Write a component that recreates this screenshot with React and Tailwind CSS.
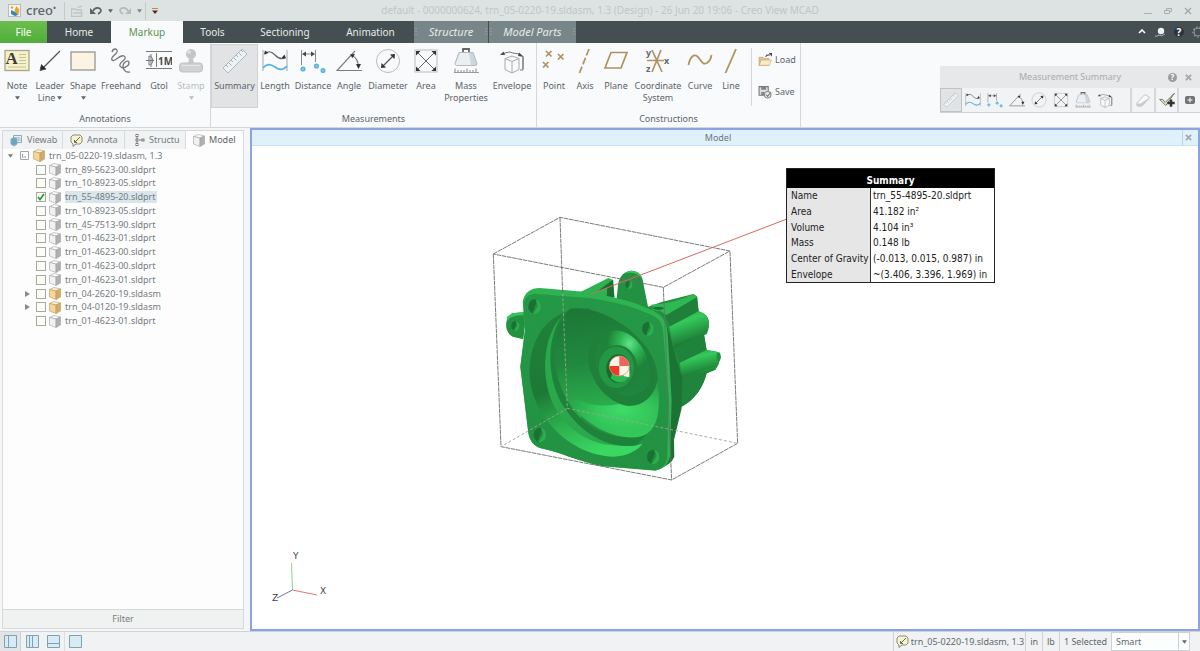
import React, { useState } from 'react';
import clsx from 'clsx';

const MENU = [
  { label: 'Home', cls: 'w-16' },
  { label: 'Markup', cls: 'w-18' },
  { label: 'Tools', cls: 'w-[59px]' },
  { label: 'Sectioning', cls: 'w-[86px]' },
  { label: 'Animation', cls: 'w-[85px]' },
];

const TREE = [
  { name: 'trn_89-5623-00.sldprt' },
  { name: 'trn_10-8923-05.sldprt' },
  { name: 'trn_55-4895-20.sldprt', checked: true },
  { name: 'trn_10-8923-05.sldprt' },
  { name: 'trn_45-7513-90.sldprt' },
  { name: 'trn_01-4623-01.sldprt' },
  { name: 'trn_01-4623-00.sldprt' },
  { name: 'trn_01-4623-00.sldprt' },
  { name: 'trn_01-4623-01.sldprt' },
  { name: 'trn_04-2620-19.sldasm', asm: true },
  { name: 'trn_04-0120-19.sldasm', asm: true },
  { name: 'trn_01-4623-01.sldprt' },
];

const SUMMARY = [
  ['Name', 'trn_55-4895-20.sldprt'],
  ['Area', '41.182 in²'],
  ['Volume', '4.104 in³'],
  ['Mass', '0.148 lb'],
  ['Center of Gravity', '(-0.013, 0.015, 0.987) in'],
  ['Envelope', '~(3.406, 3.396, 1.969) in'],
];

/* ---------- icons, all on a 26 x 26 grid ---------- */

function Svg({ children, className = 'w-[26px] h-[26px]' }) {
  return (
    <svg viewBox="0 0 26 26" className={clsx('block shrink-0', className)} fill="none" stroke="#555" strokeWidth="1">
      {children}
    </svg>
  );
}

const NoteIcon = p => (
  <Svg {...p}>
    <rect x="1" y="2.500" width="24" height="20" fill="#f6f1c9" stroke="#a9a68c" strokeWidth="1.300" />
    <path d="M15 6.500h7M15 9.500h7M15 12.500h7M15 15.500h7M4 19h18" stroke="#c6c19c" />
    <text x="1.500" y="16" fontSize="17" fontWeight="bold" fontFamily="Liberation Serif, serif" fill="#3c3c38" stroke="none">A</text>
  </Svg>
);
const LeaderIcon = p => (
  <Svg {...p}>
    <path d="M23 3L6 20" stroke="#555" strokeWidth="1.200" />
    <path d="M3 22.500l1.500-6 4.500 4.500z" fill="#222" />
  </Svg>
);
const ShapeIcon = p => (
  <Svg {...p}><rect x="1" y="4" width="24" height="18" fill="#fdf3e3" stroke="#969696" strokeWidth="1.300" /></Svg>
);
const FreehandIcon = p => (
  <Svg {...p}>
    <path d="M4 4C5 0 10 0 9 4 8 7 2 9 4 12c3 3 7-6 12-4 5 3-6 6-4 10 2 4 9 0 9-3 0-4-6-1-6 3 0 4 3 7 7 6" stroke="#777" strokeWidth="1.300" />
  </Svg>
);
const GtolIcon = p => (
  <Svg {...p}>
    <path d="M0 3.500h26M0 20.500h26M10.500 5v14M0 12.500h8M3 8v9c5 0 5-9 0-9M5 6v13" stroke="#777" />
    <text x="12" y="17" fontSize="10" fontWeight="bold" fontFamily="Open Sans, sans-serif" fill="#4c4c4c" stroke="none">1M</text>
  </Svg>
);
const StampIcon = p => (
  <Svg {...p}>
    <circle cx="13" cy="6" r="5" fill="#c3c5c6" stroke="none" />
    <circle cx="11" cy="4" r="2" fill="#dddedf" stroke="none" />
    <path d="M11 10h4l1 6h-6z" fill="#c6c8c9" stroke="none" />
    <rect x="1.500" y="15" width="23" height="9" rx="3" fill="#cfd1d2" stroke="#c0c2c3" />
    <path d="M4 17.500h18" stroke="#e6e7e7" />
  </Svg>
);
const RulerIcon = p => (
  <Svg {...p}>
    <path d="M1 20L20 1l5 5L6 25z" fill="#edf2f5" stroke="#b5b9bb" />
    <path d="M4 17l2 2M6.500 14.500l3 3M9 12l2 2M11.500 9.500l3 3M14 7l2 2M16.500 4.500l3 3M19 2l2 2" stroke="#94b4c6" />
  </Svg>
);
const LengthIcon = p => (
  <Svg {...p}>
    <path d="M1 2v21M25 2v21" stroke="#a9a9a9" />
    <path d="M3 6c4-4 7-2 10 1s6 5 10 3" stroke="#666" strokeWidth="1.200" />
    <path d="M2 6.500l1-4 3.500 2.500zM24 10.500l-4.500-.5 3-3.500z" fill="#333" stroke="none" />
    <path d="M1 20c4-5 8-4 12-1s8 4 12-1" stroke="#5bb2dc" strokeWidth="1.700" />
  </Svg>
);
const DistanceIcon = p => (
  <Svg {...p}>
    <path d="M1.500 2v15M15.500 2v12M4 6h9" stroke="#888" />
    <path d="M2 6l4-2.500v5zM15 6l-4-2.500v5z" fill="#444" stroke="none" />
    <g fill="#8fd0f0" stroke="#5bb2dc" strokeWidth="1.500"><circle cx="3" cy="21" r="1.800" /><circle cx="16.500" cy="18" r="1.800" /><circle cx="23" cy="22.500" r="1.800" /></g>
  </Svg>
);
const AngleIcon = p => (
  <Svg {...p}>
    <path d="M19 3L1 22.500h25M16 7.500c4 2 6.500 6 6.500 12" stroke="#7d7d7d" strokeWidth="1.200" />
    <path d="M14 6.500l5-.5-2.500 4zM22.500 21l-2.500-5h5z" fill="#333" stroke="none" />
  </Svg>
);
const DiameterIcon = p => (
  <Svg {...p}>
    <circle cx="13" cy="13" r="11.500" stroke="#bcbcbc" />
    <path d="M8 18L18 8" stroke="#555" strokeWidth="1.200" />
    <path d="M6 20l.5-5L11 19.500zM20 6l-.5 5L15 6.500z" fill="#333" stroke="none" />
  </Svg>
);
const AreaIcon = p => (
  <Svg {...p}>
    <rect x="2" y="2" width="22" height="22" stroke="#bababa" />
    <path d="M5 5l16 16M21 5L5 21" stroke="#666" />
    <path d="M3 3h4.500L3 7.500zM23 3h-4.500L23 7.500zM3 23h4.500L3 18.500zM23 23h-4.500l4.500-4.500z" fill="#333" stroke="none" />
  </Svg>
);
const MassIcon = p => (
  <Svg {...p}>
    <path d="M10 4V1h6v3" stroke="#666" strokeWidth="1.800" />
    <path d="M6 4.500h14l4 11q0 2-2 2H4q-2 0-2-2z" fill="#ccd6dc" stroke="#b4babd" />
    <path d="M7 5h9l2 12H4q-2 0-1-2z" fill="#eaeff1" stroke="none" />
    <path d="M1 24.500h25" stroke="#9b9b9b" />
    <path d="M2 20.500v4M5 22v2M8 22v2M11 22v2M14 20.500v4M17 22v2M20 22v2M23 20.500v4" stroke="#8a8a8a" />
  </Svg>
);
const EnvelopeIcon = p => (
  <Svg {...p}>
    <path d="M13 8l7 2.500v11l-7 3.500-7-3.500v-11zM6 10.500l7 3 7-3M13 13.500V25" fill="#f8f9f9" stroke="#a9a9a9" />
    <path d="M3 6l3-1q5-2 8 0l6 1M24 9v12M21 22h3V9" stroke="#777" />
    <path d="M1 7l3.500-3.500L6 7zM25 9l-5-4.500-1 3.500z" fill="#4a4a4a" stroke="none" />
  </Svg>
);
const PointIcon = p => (
  <Svg {...p}><path d="M5 3l5.500 5.500M10.500 3L5 8.500M17 6l5.500 5.500M22.500 6L17 11.500M2 14l5.500 5.500M7.500 14L2 19.500" stroke="#b0925f" strokeWidth="1.700" /></Svg>
);
const AxisIcon = p => (
  <Svg {...p}><path d="M17 1L7.500 25" stroke="#b0925f" strokeWidth="1.700" strokeDasharray="7 2.500" /></Svg>
);
const PlaneIcon = p => (
  <Svg {...p}><path d="M8 4.500h16L18 20H2z" stroke="#b0925f" strokeWidth="1.700" /></Svg>
);
const CoordIcon = p => (
  <Svg {...p}>
    <path d="M2 12.500h17M7 2l10 22M16 2L7 24" stroke="#b0925f" strokeWidth="1.700" />
    <g fontSize="9" fontWeight="bold" fontFamily="Noto Sans, sans-serif" fill="#666" stroke="none">
      <text x="1" y="8">y</text><text x="19" y="15.500">x</text><text x="1" y="24">z</text>
    </g>
  </Svg>
);
const CurveIcon = p => (
  <Svg {...p}><path d="M1.500 17C3 9 7 5 11 9c4 5 5 8 9 6 3-2 4-5 4.500-8" stroke="#b0925f" strokeWidth="1.800" /></Svg>
);
const LineIcon = p => (
  <Svg {...p}><path d="M18 1L7.500 25" stroke="#b0925f" strokeWidth="1.800" /></Svg>
);
const OpenIcon = p => (
  <Svg {...p}>
    <path d="M2 8h7l2 2h9v13H2z" fill="#e3c28a" stroke="#b69660" />
    <path d="M6 13h19l-4 10H2z" fill="#f9eac8" stroke="#bd9c66" />
    <path d="M14 7c2-4 5-4 8-3" stroke="#555" strokeWidth="2" /><path d="M20 0h6v7z" fill="#444" stroke="none" />
  </Svg>
);
const SaveIcon = p => (
  <Svg {...p}>
    <path d="M2 3h17v16H2z" fill="#dcdfe1" stroke="#777" strokeWidth="2" />
    <path d="M6 3h9v6H6zM6 13h6v6H6z" fill="#808486" stroke="none" />
    <circle cx="18" cy="18" r="6" fill="#ece9df" stroke="#8b8b86" strokeWidth="2" /><path d="M15 18l3 3 6-8" stroke="#777" strokeWidth="2" />
  </Svg>
);
const EraserIcon = p => (
  <Svg {...p}>
    <path d="M3 18L15 5q1-1 3 0l5 3q1 1 0 2L12 22q-1 1-3 1H5q-2 0-2-2z" fill="#f7f8f8" stroke="#a5a7a8" />
    <path d="M3.500 18.500h6L23 9q.5 1-.5 2L12 22q-1 1-3 1H5q-2 0-1.500-2z" fill="#c9cbcc" stroke="none" />
  </Svg>
);
const ApplyIcon = p => (
  <Svg {...p}>
    <path d="M1 12h5l4 5L25 2 11 22z" fill="#e3ecd8" stroke="#5d6b54" strokeWidth="1.400" />
    <path d="M19.500 12v12M13.500 18h12" stroke="#333" strokeWidth="4" />
  </Svg>
);

function Cube({ asm }) {
  return (
    <svg viewBox="0 0 12 13" className="block w-3 h-[13px] shrink-0" strokeWidth=".6" stroke={asm ? '#b8995f' : '#a3a3a3'}>
      <path d="M.5 2.500L5 .5l6.500 1.500L7 4z" fill={asm ? '#fdefcf' : '#fbfbfb'} />
      <path d="M.5 2.500L7 4v8.500L.5 10z" fill={asm ? '#f5d79c' : '#f1f1f1'} />
      <path d="M7 4l4.500-2v8L7 12.500z" fill={asm ? '#d3ab67' : '#b0b0b0'} />
    </svg>
  );
}

const AnnotIcon = () => (
  <svg viewBox="0 0 13 13" className="block w-[13px] h-[13px] shrink-0" fill="none">
    <path d="M3 1h7l2 2v5l-2 2H6l-3 2.500V10L1 8V3z" fill="#f6f3cf" stroke="#8b8b7e" />
    <path d="M10 3L5 8M4.500 6v2.500H7" stroke="#666" />
  </svg>
);

const Caret = ({ className = '' }) => (
  <svg viewBox="0 0 6 4" className={clsx('inline-block w-[5px] h-[4px]', className)}><path d="M0 0h6L3 4z" fill="currentColor" /></svg>
);

/* ---------- ribbon ---------- */

function Tool({ icon: Icon, label, line2, caret, caret2, width, active, disabled }) {
  return (
    <button
      type="button"
      disabled={disabled}
      className={clsx(
        'flex flex-col items-center h-16 pt-1 leading-3 whitespace-nowrap',
        width,
        active && 'bg-[#e1e3e5] ring-1 ring-inset ring-[#d0d2d4]',
        disabled && 'text-[#b9bcbe]',
      )}
    >
      <Icon />
      <span className="mt-1.5">{label}</span>
      {line2 && <span>{line2}{caret2 && <Caret className="ml-0.5 mb-0.5" />}</span>}
      {caret && <Caret className="mt-1" />}
    </button>
  );
}

function Group({ title, width, children }) {
  return (
    <section className={clsx('flex flex-col border-r border-[#d5d8da] pt-px', width)}>
      <div className="flex h-[66px]">{children}</div>
      <h2 className="text-center leading-4 h-[17px] pt-px">{title}</h2>
    </section>
  );
}

function Ribbon() {
  return (
    <div className="relative flex h-[85px] bg-[#f8fafc] border-b border-[#d3d8dc] text-[9px] text-[#5d6468]">
      <Group title="Annotations" width="w-[211px]">
        <Tool icon={NoteIcon} label="Note" width="w-[34px]" caret />
        <Tool icon={LeaderIcon} label="Leader" line2="Line" caret2 width="w-8" />
        <Tool icon={ShapeIcon} label="Shape" width="w-[34px]" caret />
        <Tool icon={FreehandIcon} label="Freehand" width="w-[42px]" />
        <Tool icon={GtolIcon} label="Gtol" width="w-[34px]" />
        <Tool icon={StampIcon} label="Stamp" width="w-[30px]" caret disabled />
      </Group>
      <Group title="Measurements" width="w-[326px]">
        <Tool icon={RulerIcon} label="Summary" width="w-[47px]" active />
        <Tool icon={LengthIcon} label="Length" width="w-[34px]" />
        <Tool icon={DistanceIcon} label="Distance" width="w-[42px]" />
        <Tool icon={AngleIcon} label="Angle" width="w-[30px]" />
        <Tool icon={DiameterIcon} label="Diameter" width="w-12" />
        <Tool icon={AreaIcon} label="Area" width="w-7" />
        <Tool icon={MassIcon} label="Mass" line2="Properties" width="w-[52px]" />
        <Tool icon={EnvelopeIcon} label="Envelope" width="w-10" />
      </Group>
      <Group title="Constructions" width="w-[264px]">
        <Tool icon={PointIcon} label="Point" width="w-[34px]" />
        <Tool icon={AxisIcon} label="Axis" width="w-7" />
        <Tool icon={PlaneIcon} label="Plane" width="w-[34px]" />
        <Tool icon={CoordIcon} label="Coordinate" line2="System" width="w-[50px]" />
        <Tool icon={CurveIcon} label="Curve" width="w-[34px]" />
        <Tool icon={LineIcon} label="Line" width="w-7" />
        <div className="flex flex-col gap-4 ml-1.5 my-1 pl-1.5 pt-1 border-l border-[#d5d8da]">
          <button type="button" className="flex items-center gap-[3px] h-4"><OpenIcon className="w-3.5 h-3.5" />Load</button>
          <button type="button" className="flex items-center gap-[3px] h-4"><SaveIcon className="w-3.5 h-3.5" />Save</button>
        </div>
      </Group>
      <MeasurePanel />
    </div>
  );
}

function MeasurePanel() {
  const tools = [
    ['Summary', RulerIcon], ['Length', LengthIcon], ['Distance', DistanceIcon], ['Angle', AngleIcon],
    ['Diameter', DiameterIcon], ['Area', AreaIcon], ['Mass properties', MassIcon], ['Envelope', EnvelopeIcon],
  ];
  return (
    <div className="absolute right-0 top-[23px] w-[260px] bg-[#f1f3f4] border-b border-[#cfd1d2]">
      <div className="flex items-center h-[22px] bg-[#e6e8e9] text-[#a9acae]">
        <span className="grow pl-8 text-center">Measurement Summary</span>
        <span className="flex items-center justify-center w-[9px] h-[9px] mr-2 rounded-full bg-[#9a9d9f] text-white text-[8px] font-bold">?</span>
        <button type="button" aria-label="Close" className="mr-2"><Cross /></button>
      </div>
      <div className="flex h-6">
        {tools.map(([name, Icon], i) => (
          <button key={name} type="button" aria-label={name}
            className={clsx('flex items-center justify-center w-[22px]', i === 0 && 'bg-[#e1e3e5] border border-[#bfc2c4]')}>
            <Icon className="w-4 h-4" />
          </button>
        ))}
        <div className="grow" />
        <button type="button" aria-label="Erase" className="flex items-center justify-center w-6 border-l-2 border-[#d6d8d9]"><EraserIcon className="w-4 h-4" /></button>
        <button type="button" aria-label="Apply" className="flex items-center justify-center w-[23px] border-l-2 border-[#d6d8d9]"><ApplyIcon className="w-4 h-4" /></button>
        <button type="button" aria-label="Add" className="flex items-center justify-center w-[23px] border-l-2 border-[#d6d8d9]">
          <svg viewBox="0 0 10 8" className="w-2.5 h-2"><rect width="10" height="8" rx="2" fill="#707476" /><path d="M5 1.500v5M2.500 4h5" stroke="#fff" /></svg>
        </button>
      </div>
    </div>
  );
}

const Cross = () => (
  <svg viewBox="0 0 8 8" className="w-[7px] h-[7px]"><path d="M1 1l6 6M7 1L1 7" stroke="#a4a8aa" strokeWidth="2" /></svg>
);

function TitleBar() {
  return (
    <header className="grid grid-cols-[1fr_auto_1fr] items-center h-[21px] bg-[#dde3e3] text-[#5c6467]">
      <div className="flex items-center h-full">
        <svg viewBox="0 0 13 13" className="w-[13px] h-[13px] ml-2">
          <rect x=".5" y=".5" width="12" height="12" fill="#f2f4f4" stroke="#b6bcbd" />
          <circle cx="4" cy="3.500" r="1.300" fill="#e2a43a" />
          <path d="M8.500 2l3 4-1 5-3-1-1-4z" fill="#eda12b" /><path d="M3 6l4 2 3 3-3 1-4-2z" fill="#2f87b8" />
        </svg>
        <span className="ml-[5px] mb-0.5 text-[13px] leading-4 font-medium">creo<span className="text-[8px] align-top leading-3">•</span></span>
        <i className="ml-2 w-px h-[18px] bg-[#c4cacb]" />
        <button type="button" aria-label="Open" className="ml-1.5">
          <svg viewBox="0 0 12 12" className="block w-3 h-3" fill="none" stroke="#bfc5c6"><path d="M.5 4h4l1 1h5v6.500H.5zM2 8h9.500M7 3c1-2 2-2 4-1.500" strokeWidth="1.300" /></svg>
        </button>
        <button type="button" aria-label="Undo" className="ml-[7px] flex items-center gap-1.5">
          <svg viewBox="0 0 12 9" className="block w-3 h-[9px]" fill="none"><path d="M3 5c2-4 7-4 8-1 0 2-1 3-3 4" stroke="#596265" strokeWidth="1.600" /><path d="M0 2v6h6z" fill="#596265" /></svg>
          <Caret />
        </button>
        <button type="button" aria-label="Redo" className="ml-1.5 flex items-center gap-1.5 text-[#7d8587]">
          <svg viewBox="0 0 12 9" className="block w-3 h-[9px]" fill="none"><path d="M9 5C7 1 2 1 1 4c0 2 1 3 3 4" stroke="#b4bbbc" strokeWidth="1.600" /><path d="M12 2v6H6z" fill="#b4bbbc" /></svg>
          <Caret />
        </button>
        <i className="ml-[3px] w-px h-[18px] bg-[#c4cacb]" />
        <button type="button" aria-label="Customize" className="ml-1.5">
          <svg viewBox="0 0 6 6" className="block w-1.5 h-1.5"><path d="M0 .5h6" stroke="#c08a4b" /><path d="M0 2.500h6L3 6z" fill="#4b2f22" /></svg>
        </button>
      </div>
      <h1 className="text-[10px] text-[#bfc6c6] whitespace-nowrap">default - 0000000624, trn_05-0220-19.sldasm, 1.3 (Design) - 26 Jun 20 19:06 - Creo View MCAD</h1>
      <div className="flex items-center justify-end gap-3 mr-2">
        <button type="button" aria-label="Minimize"><svg viewBox="0 0 8 8" className="block w-2 h-2"><path d="M0 6.500h8" stroke="#aab1b1" /></svg></button>
        <button type="button" aria-label="Restore"><svg viewBox="0 0 8 8" className="block w-2 h-2" fill="none" stroke="#a7aeaf"><path d="M.5 3.500h5v3h-5zM2.500 3V1.500h5v3H6" /></svg></button>
        <button type="button" aria-label="Close"><svg viewBox="0 0 8 8" className="block w-2 h-2"><path d="M1 1l6 6M7 1L1 7" stroke="#9fa6a7" strokeWidth="1.300" /></svg></button>
      </div>
    </header>
  );
}

function Grip({ className }) {
  return (
    <svg viewBox="0 0 2 8" className={clsx('w-0.5 h-2 shrink-0', className)}><path d="M1 0v8" stroke="#a5b0b2" strokeDasharray="1 2" /></svg>
  );
}

function MenuBar({ tab, setTab }) {
  return (
    <nav className="flex h-[22px] bg-[#454f51] text-[10px] text-[#e6eaea]">
      <button type="button" className="w-[47px] bg-linear-to-b from-[#6cbd4c] to-[#4fae3b] text-white">File</button>
      {MENU.map(m => (
        <button key={m.label} type="button" onClick={() => setTab(m.label)}
          className={clsx(m.cls, tab === m.label && 'bg-[#f8fafc] text-[#5a9550]')}>
          {m.label}
        </button>
      ))}
      <button type="button" className="flex items-center justify-between w-[74px] ml-px px-px bg-[#788689] text-[11px] italic">
        <Grip />Structure<Grip />
      </button>
      <button type="button" className="flex items-center justify-between w-[87px] ml-px px-px bg-[#788689] text-[11px] italic">
        <Grip />Model Parts<Grip />
      </button>
      <div className="flex items-center gap-2 ml-auto">
        <svg viewBox="0 0 8 5" className="w-2 h-[5px] mb-0.5"><path d="M1 4l3-3 3 3" stroke="#fff" strokeWidth="1.600" fill="none" /></svg>
        <svg viewBox="0 0 12 12" className="w-3 h-3"><circle cx="7" cy="5" r="3.200" fill="#eef1f1" /><path d="M1 10q3 1 3-1 4 2 7-1" stroke="#a6aeaf" fill="none" /></svg>
        <span className="flex items-center justify-center w-2.5 h-2.5 rounded-full bg-[#2d3537] font-bold text-white">?</span>
        <svg viewBox="0 0 12 12" className="w-3 h-3 -mr-1"><circle cx="6" cy="6" r="4" stroke="#8d9697" strokeWidth="1" fill="none" /><circle cx="6" cy="6" r="5" stroke="#8d9697" strokeWidth="1.500" strokeDasharray="1.500 2" fill="none" /></svg>
      </div>
    </nav>
  );
}

/* ---------- left panel ---------- */

function SidePanel() {
  const [checked, setChecked] = useState(() => TREE.map(t => !!t.checked));
  const toggle = i => setChecked(c => c.map((v, n) => (n === i ? !v : v)));
  const tab = 'flex items-center gap-1 h-full overflow-hidden whitespace-nowrap border-r border-[#d9dcdd]';

  return (
    <aside className="flex flex-col w-[242px] ml-0.5 mt-0.5 mb-0.5 shrink-0 bg-[#fdfdfd] border border-[#d6d9da] text-[9px] text-[#757c7f]">
      <div className="flex h-[18px] shrink-0 bg-[#f0f2f3]">
        <button type="button" className={clsx(tab, 'w-[60px] pl-[7px]')}>
          <svg viewBox="0 0 13 13" className="w-[13px] h-[13px] shrink-0" fill="#e4f0f6" stroke="#8fabb9"><path d="M3.500 1.500h8v7h-8z" /><path d="M1 5l3-1.500L7 5v5l-3 2-3-2z" fill="#6aa5c2" /><path d="M5 4h5M8 6h3" /></svg>
          Viewab
        </button>
        <button type="button" className={clsx(tab, 'w-[62px] pl-[7px]')}><AnnotIcon />Annota</button>
        <button type="button" className={clsx(tab, 'w-[61px] pl-2.5')}>
          <svg viewBox="0 0 10 12" className="w-2.5 h-3 shrink-0" fill="none" stroke="#7d7d7d"><rect x="1" y=".5" width="2" height="2" /><rect x="1" y="5" width="2" height="2" /><rect x="1" y="9.500" width="2" height="2" /><rect x="7" y="5" width="2" height="2" /><path d="M2 3v2M2 7v2M4 6h3" /></svg>
          Structu
        </button>
        <button type="button" className="flex items-center gap-1 grow pl-[7px] h-full bg-[#fdfdfd] text-[#5d6468]"><Cube />Model</button>
      </div>

      <ul className="grid auto-rows-fr h-[179px] leading-3">
        <li className="flex items-center pl-[5px]">
          <Caret className="mr-[7px]" />
          <svg viewBox="0 0 9 9" className="w-[9px] h-[9px] mr-1" fill="none" stroke="#a0a5a6"><path d="M.5.500h8v8h-8zM2.500 3v3.500h1M5 5v1.500h1" /></svg>
          <Cube asm />
          <span className="ml-1">trn_05-0220-19.sldasm, 1.3</span>
        </li>
        {TREE.map((t, i) => (
          <li key={i} className="flex items-center pl-[22px]">
            <svg viewBox="0 0 5 6" className="w-[5px] h-1.5 mr-1.5">{t.asm && <path d="M0 0v6l5-3z" fill="#8a8a8a" />}</svg>
            <label className="flex items-center">
              <input
                type="checkbox"
                checked={checked[i]}
                onChange={() => toggle(i)}
                className="peer appearance-none w-[10px] h-[10px] border border-[#a6aaa0] bg-[#fdfdf8]"
              />
              <svg viewBox="0 0 10 10" className="w-[10px] h-[10px] -ml-[10px] mr-[3px] invisible peer-checked:visible pointer-events-none">
                <path d="M2 5l2 2.500L8 2" stroke="#2f9a3e" strokeWidth="1.800" fill="none" />
              </svg>
              <Cube asm={t.asm} />
              <span className={clsx('ml-1 pr-px', t.checked && 'bg-[#d9e6ec]')}>{t.name}</span>
            </label>
          </li>
        ))}
      </ul>

      <button type="button" className="mt-auto h-[19px] bg-[#f0f2f2] border-t border-[#d6d9da]">Filter</button>
    </aside>
  );
}

/* ---------- 3D view ---------- */

function Hole({ x, y, r }) {
  return (
    <g transform={`translate(${x} ${y}) scale(${r})`}>
      <ellipse rx="1" ry="1.200" fill="#2cb04e" />
      <path d="M.2-1.180A1 1.200 0 1 0-.3 1.150Q-.1.300.1 0 .4-.6.2-1.180Z" fill="#1b7033" />
      <path d="M.2-1.180Q.4-.6.1 0-.1.300-.3 1.150 0 .9.500 0 .6-.6.200-1.180Z" fill="#22903f" />
    </g>
  );
}

function Housing() {
  return (
    <g transform="translate(480 200) scale(.3333)">
      <defs>
        <linearGradient id="bowl" x1=".5" y1="0" x2=".6" y2="1">
          <stop offset="0" stopColor="#1c7836" /><stop offset=".4" stopColor="#21893f" />
          <stop offset=".7" stopColor="#29a84b" /><stop offset="1" stopColor="#35cc5c" />
        </linearGradient>
        <radialGradient id="bowlLight" cx=".6" cy=".45" r=".6">
          <stop offset="0" stopColor="#3fdd69" /><stop offset=".5" stopColor="#38d060" stopOpacity=".7" />
          <stop offset="1" stopColor="#2eb651" stopOpacity="0" />
        </radialGradient>
        <linearGradient id="groove" x1=".2" y1="0" x2=".5" y2="1">
          <stop offset="0" stopColor="#1f8239" /><stop offset=".5" stopColor="#1d7936" />
          <stop offset=".75" stopColor="#2cb04e" /><stop offset="1" stopColor="#3ad862" />
        </linearGradient>
        <linearGradient id="rib" x1="0" y1="0" x2=".35" y2="1">
          <stop offset="0" stopColor="#26a047" /><stop offset=".35" stopColor="#35c95a" />
          <stop offset=".75" stopColor="#22903f" /><stop offset="1" stopColor="#196c31" />
        </linearGradient>
        <linearGradient id="face" x1="0" y1="0" x2="0" y2="1">
          <stop offset="0" stopColor="#259848" /><stop offset="1" stopColor="#229142" />
        </linearGradient>
        <radialGradient id="hub" cx=".62" cy=".2" r=".8">
          <stop offset="0" stopColor="#62e388" /><stop offset=".22" stopColor="#2fb855" />
          <stop offset=".5" stopColor="#1f8239" /><stop offset="1" stopColor="#1f8640" />
        </radialGradient>
      </defs>

      {/* body behind the flange */}
      <path d="M500 322L545 306 640 282 652 290 656 334C684 342 692 362 685 385L672 405 680 450 712 455 722 470 715 495 706 510 680 520C670 560 645 600 605 620L560 560Z" fill="#22903f" />
      <path d="M512 314Q580 312 640 282L652 290 560 345Z" fill="#2eb953" />
      <path d="M555 348L650 293 656 334 572 382Z" fill="#1f803a" />
      <path d="M568 380L656 334C690 345 692 378 680 402L582 446Z" fill="url(#rib)" />
      <path d="M582 446L672 402 680 450 600 492Z" fill="#20833b" />
      <path d="M600 488L680 450 715 457 722 472 714 495 606 535Z" fill="url(#rib)" />
      <ellipse cx="716" cy="470" rx="6" ry="13" fill="#22903f" />
      <path d="M606 530L706 508 680 520C670 560 645 600 605 620Z" fill="#20843c" />
      <ellipse cx="535" cy="325" rx="18" ry="6" fill="#1b7033" stroke="#2eb953" strokeWidth="3" />

      {/* rib and lug on the top edge */}
      <path d="M300 277L385 234 400 240 404 300 340 300Z" fill="#2db450" />
      <path d="M352 274L398 240 403 292 380 290 382 264Z" fill="#1b6f32" />
      <path d="M408 318L414 255C418 226 436 212 456 212 478 214 488 228 490 250L506 330Z" fill="#229142" />
      <path d="M430 222C450 204 480 212 486 236 470 216 448 216 430 222Z" fill="#34c75a" />
      <Hole x={447} y={254} r={10} />
      <path d="M140 336L96 340C72 356 72 396 98 410L130 418Z" fill="#229142" />
      <path d="M80 352Q90 338 130 336L130 346Q96 344 82 362Z" fill="#34c75a" />
      <Hole x={106} y={378} r={12} />

      {/* flange */}
      <path d="M540 350C568 372 575 440 607 530L605 625 582 720 583 770Q575 795 525 812L540 600Z" fill="#1b7434" />
      <path d="M128 305Q136 264 180 264L320 276C400 290 490 310 540 345Q560 362 563 400L575 600 570 770Q562 806 525 812L370 799C290 784 240 755 180 744 156 735 146 715 144 690L121 500 135 390Z" fill="#2db450" />
      <path d="M130 310Q140 278 172 282L330 294C400 304 470 322 525 350Q548 364 550 400L566 600 562 775Q556 806 525 811L370 799C290 784 240 755 180 744 156 735 146 715 144 690L121 500 135 390Z" fill="url(#face)" />

      {/* bowl */}
      <path d="M330 326C210 320 145 410 149 530 158 650 270 765 400 770 440 769 475 752 488 730 450 750 350 730 300 690Z" fill="url(#groove)" />
      <path d="M250 345C180 410 180 560 235 640 290 720 390 760 490 722 380 740 300 680 260 610 200 520 205 400 270 325Z" fill="#2aa84b" />
      <path d="M250 345C195 410 200 550 255 625 310 710 400 750 470 735L500 705C390 730 310 680 265 610 215 520 225 400 270 325Z" fill="#1f823a" />
      <path d="M270 326C330 318 390 345 446 386 510 440 545 540 535 630 530 680 510 705 470 712 380 718 300 655 262 600 205 500 215 390 270 326Z" fill="url(#bowl)" />
      <path d="M262 560C300 640 440 630 536 560 545 680 510 711 465 712 380 718 300 655 262 600Z" fill="url(#bowlLight)" />

      {/* hub */}
      <path d="M325 470C325 410 360 375 405 378 470 390 530 460 533 535 525 590 490 618 445 618 380 608 325 540 325 470Z" fill="#1f8039" />
      <path d="M345 470C350 420 380 390 415 392 465 398 510 455 512 530 505 570 470 590 440 588 385 580 345 530 345 470Z" fill="url(#hub)" />
      <ellipse cx="412" cy="506" rx="60" ry="71" fill="#1f813a" />
      <ellipse cx="409" cy="502" rx="53" ry="62" fill="#249744" />
      <ellipse cx="415" cy="506" rx="36" ry="43" fill="#1a6a30" />
      <path d="M392 535Q425 565 450 525L448 500 400 510Z" fill="#2fb753" />

      {/* mounting holes */}
      <Hole x={164} y={320} r={18} />
      <Hole x={504} y={387} r={17} />
      <Hole x={180} y={705} r={18} />
      <Hole x={520} y={771} r={18} />

      {/* centre of gravity marker */}
      <circle cx="418" cy="498" r="30" fill="#fbf4e9" />
      <path d="M418 498V468A30 30 0 0 1 448 498Z" fill="#f0645a" />
      <path d="M418 498V528A30 30 0 0 1 388 498Z" fill="#ee3a2b" />
      <path d="M448 498v34l-18-4z" fill="#fbf4e9" />
      <circle cx="418" cy="498" r="30" fill="none" stroke="#e0886a" strokeWidth="2" />

      {/* envelope box */}
      <g fill="none" stroke="#6c6c6c" strokeWidth="2.700" strokeDasharray="14 2">
        <path d="M40 162L240 52 750 153 550 262ZM40 162L63 740 575 840 773 730 750 153M550 262L575 840M240 52L248 280" />
        <path d="M248 280L262 625 773 730M262 625L63 740" stroke="#9aa88c" strokeDasharray="9 6" />
      </g>
      <path d="M333 282L921 57" stroke="#d8685f" strokeWidth="3" />
    </g>
  );
}

function Viewport() {
  return (
    <main className="flex flex-col grow min-w-0 ml-[6px] border-2 border-[#8ba3e0] bg-white">
      <div className="flex items-center h-4 shrink-0 bg-[#dff1fd] border-b border-[#cde2ee] text-[9px] text-[#6d777c]">
        <span className="grow pl-0.5 text-center">Model</span>
        <button type="button" aria-label="Close view" className="flex items-center justify-center h-full w-4 pr-1 border-l border-[#b9d3e3]"><Cross /></button>
      </div>
      <div className="relative grow overflow-hidden">
        <svg viewBox="252 146 946 483" className="block w-[946px] h-[483px]">
          <Housing />
          <g fill="none" strokeWidth="1">
            <path d="M292.500 590L291.500 563" stroke="#8ad497" />
            <path d="M292.500 590L317 595" stroke="#e4756f" />
            <path d="M292.500 590L277 598" stroke="#6d6dc4" />
          </g>
          <g fontSize="9" fontFamily="DejaVu Sans, sans-serif" fill="#444">
            <text x="293" y="559">Y</text><text x="320" y="594">X</text><text x="272" y="601">Z</text>
          </g>
        </svg>

        <table className="absolute left-[534px] top-[22px] w-[209px] h-[115px] border border-[#222] border-collapse bg-white text-[10px] leading-[15px] text-[#222] font-['DejaVu_Sans_Condensed','DejaVu_Sans',sans-serif]">
          <thead>
            <tr><th colSpan={2} className="h-[19px] p-0 pt-1 bg-black text-white font-bold">Summary</th></tr>
          </thead>
          <tbody>
            {SUMMARY.map(([k, v]) => (
              <tr key={k}>
                <th scope="row" className="w-[84px] p-0 pl-1 text-left font-normal bg-[#e6e6e6] border-r border-[#333] whitespace-nowrap">{k}</th>
                <td className="p-0 pl-0.5 whitespace-nowrap">{v}</td>
              </tr>
            ))}
          </tbody>
        </table>
      </div>
    </main>
  );
}

/* ---------- status bar ---------- */

function LayoutIcon({ d }) {
  return (
    <svg viewBox="0 0 13 13" className="block w-[13px] h-[13px]" fill="#d9ebf2" stroke="#7ba2b6"><path d="M.5 .5h12v12H.5z" />{d && <path d={d} />}</svg>
  );
}

function StatusBar() {
  const cell = 'flex items-center h-full px-1 border-l border-[#cfd2d4]';
  return (
    <footer className="flex items-center h-5 shrink-0 bg-[#f0f2f4] border-t border-[#cfd3d6] text-[9px] text-[#62696c]">
      <button type="button" aria-label="Left panel" className="flex items-center justify-center w-[21px] h-full bg-[#e2e4e6] border-r border-[#cfd2d4]"><LayoutIcon d="M4.500 1v11" /></button>
      <button type="button" aria-label="Columns" className="flex items-center justify-center w-[22px]"><LayoutIcon d="M3.500 1v11M6.500 1v11" /></button>
      <button type="button" aria-label="Rows" className="flex items-center justify-center w-[21px]"><LayoutIcon d="M1 8.500h11" /></button>
      <button type="button" aria-label="Single" className="flex items-center justify-center w-[22px] h-full border-l border-[#dcdfe0]"><LayoutIcon /></button>
      <div className="flex items-center h-full ml-auto mr-[10px]">
        <span className="flex items-center gap-0.5 h-full pl-0.5 pr-px border-l border-[#cfd2d4]"><AnnotIcon />trn_05-0220-19.sldasm, 1.3</span>
        <span className={cell}>in</span>
        <span className={cell}>lb</span>
        <span className={cell}>1 Selected</span>
        <span className="flex items-center h-full border border-[#cfd2d4] bg-[#fcfdfd]">
          <select aria-label="Selection mode" className="w-[66px] h-full pl-1 appearance-none"><option>Smart</option></select>
          <span className="flex items-center justify-center w-[11px] h-full border-l border-[#cfd2d4]"><Caret /></span>
        </span>
      </div>
    </footer>
  );
}

export default function App() {
  const [tab, setTab] = useState('Markup');
  return (
    <div className="flex flex-col h-screen overflow-hidden bg-[#f4f6f8] font-['Noto_Sans','Open_Sans',sans-serif]">
      <TitleBar />
      <MenuBar tab={tab} setTab={setTab} />
      <Ribbon />
      <div className="flex grow min-h-0">
        <SidePanel />
        <Viewport />
      </div>
      <StatusBar />
    </div>
  );
}
